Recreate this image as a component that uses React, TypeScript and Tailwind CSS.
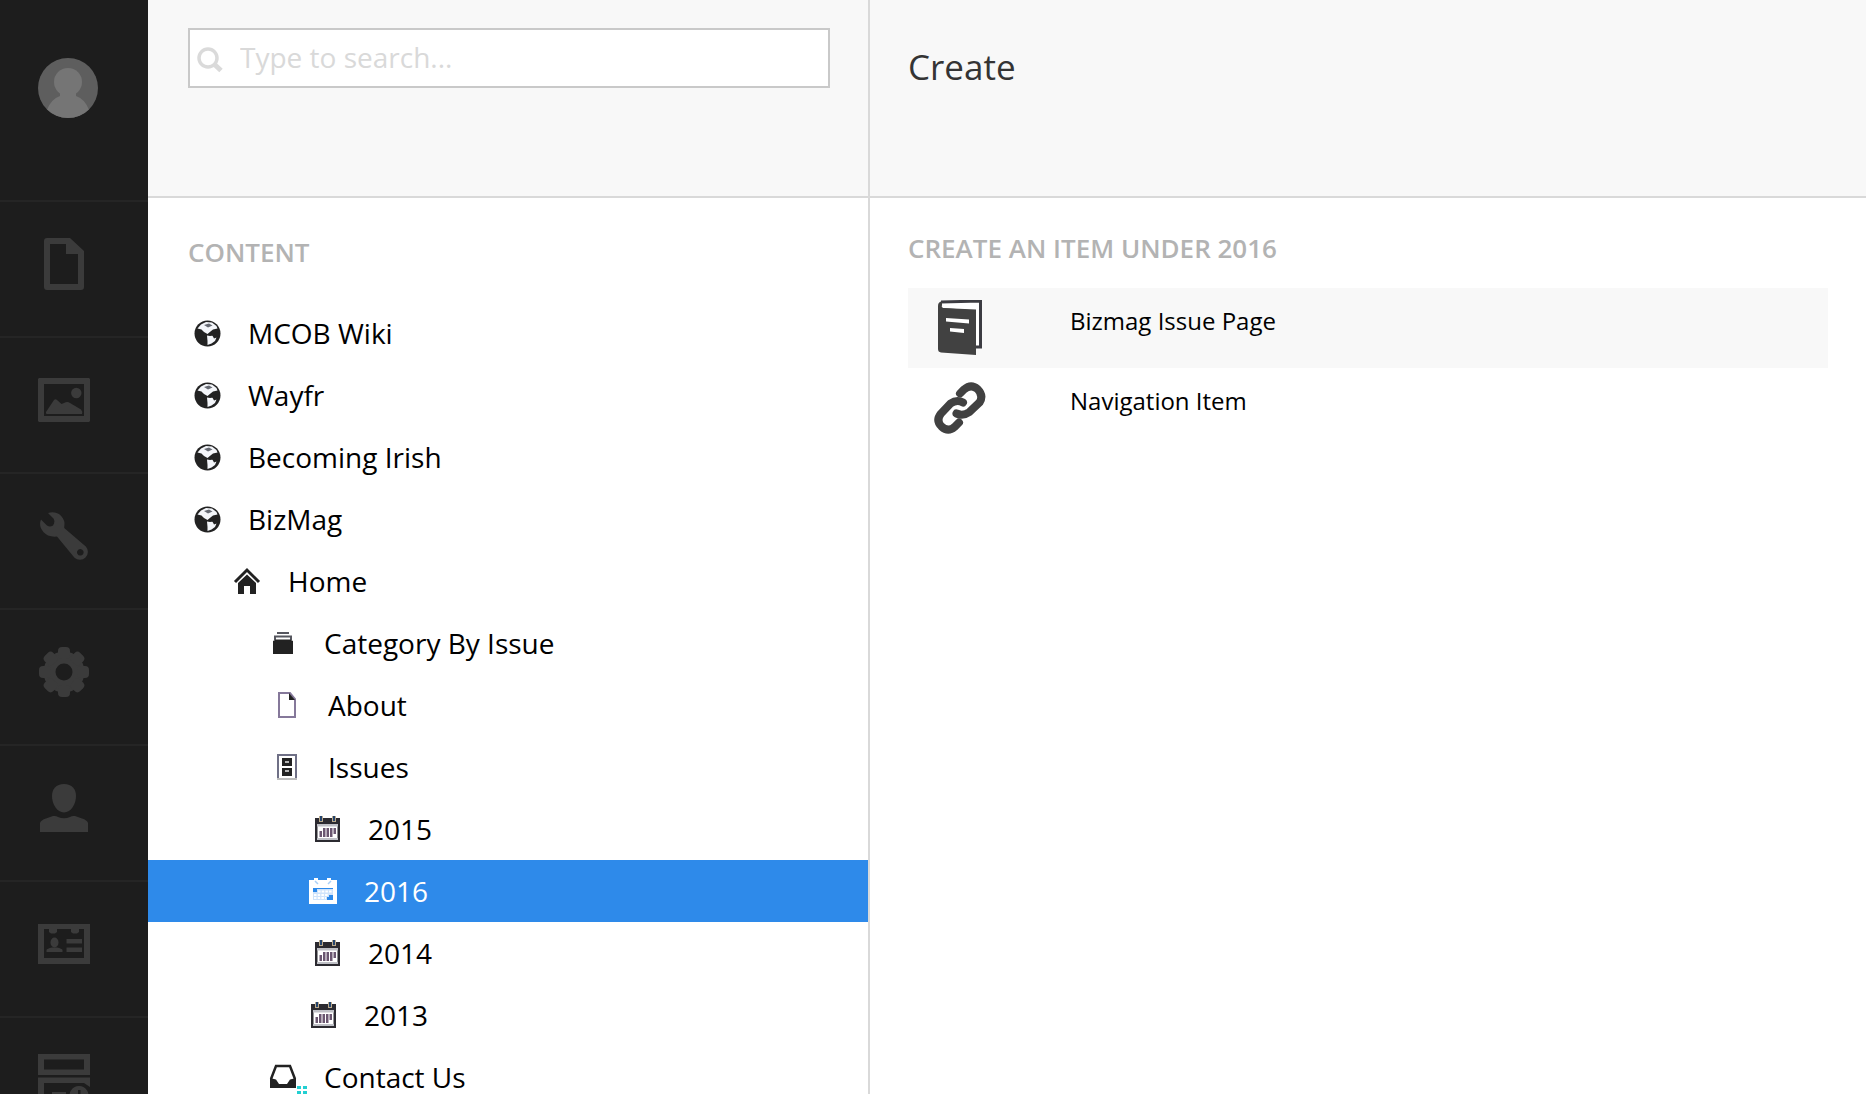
import React from 'react';

type IconProps = { className?: string };

function FileIcon() {
  return (
    <svg width="40" height="52" viewBox="0 0 40 52" fill="currentColor" fillRule="evenodd" aria-hidden="true">
      <path d="M3 0H26L40 13V49a3 3 0 0 1-3 3H3a3 3 0 0 1-3-3V3a3 3 0 0 1 3-3ZM6 6V46H34V16H22V6Z" />
    </svg>
  );
}

function MediaIcon() {
  return (
    <svg width="52" height="44" viewBox="0 0 52 44" fill="currentColor" fillRule="evenodd" aria-hidden="true">
      <path d="M1 0H51L52 1V43L51 44H1L0 43V1ZM6 6V38H46V6Z" />
      <circle cx="38.3" cy="15" r="5.2" />
      <path d="M8 34L16 22Q17.500 20.500 19 22L23.500 26L26 25Q29.500 23 32 25L43 31.500Q45 34 44 36H9Q7.500 36 8 34Z" />
    </svg>
  );
}

function WrenchIcon() {
  return (
    <svg width="48" height="48" viewBox="0 0 48 48" fill="currentColor" fillRule="evenodd" aria-hidden="true">
      <path d="M8 1Q14-1 19 2Q24 6 24.500 11L24.200 16L45.800 34.500A8 8 0 0 1 34.500 45.800L17 24.500Q12 25 8 23.500Q2 20 .5 15Q-.5 11 1 7.500L7 13.500Q10 15.500 13 13.500Q15.500 10 13.500 6.500ZM40.300 37a3.300 3.300 0 1 0 .01 0Z" />
    </svg>
  );
}

function GearIcon() {
  return (
    <svg width="52" height="52" viewBox="0 0 52 52" aria-hidden="true">
      <circle cx="26" cy="26" r="14.500" fill="none" stroke="currentColor" strokeWidth="12" />
      {[0, 45, 90, 135].map((angle) => (
        <g key={angle} transform={`rotate(${angle} 26 26)`} fill="currentColor">
          <rect x="20" y="1" width="12" height="12" rx="4" />
          <rect x="20" y="39" width="12" height="12" rx="4" />
        </g>
      ))}
    </svg>
  );
}

function UserIcon() {
  return (
    <svg width="48" height="48" viewBox="0 0 48 48" fill="currentColor" aria-hidden="true">
      <path d="M24 0C32 0 36 5 36 12C36 20 31 28.500 24 28.500S12 20 12 12C12 5 16 0 24 0Z" />
      <path d="M0 48V39Q1 36 6 34.500L13 32Q16 31.500 18 33Q24 35.500 30 33Q32 31.500 35 32L42 34.500Q47 36 48 39V48Z" />
    </svg>
  );
}

function CardIcon() {
  return (
    <svg width="52" height="40" viewBox="0 0 52 40" fill="currentColor" fillRule="evenodd" aria-hidden="true">
      <path d="M0 0H52V40H0ZM6 5V34H46V5H41V8L39 9.500H35L33 8V5H19V8L17 9.500H13L11 8V5Z" />
      <ellipse cx="16.500" cy="18.500" rx="4" ry="5" />
      <path d="M8.500 28V26Q9 24.500 14 23.500H19Q24 24.500 24.500 26V28ZM28.500 15H44V19.500H28.500ZM28.500 23.500H44V28H28.500Z" />
    </svg>
  );
}

function FormIcon() {
  return (
    <svg width="52" height="52" viewBox="0 0 52 52" fill="currentColor" fillRule="evenodd" aria-hidden="true">
      <path d="M0 0H52V21H0ZM6 5.500V15.500H46V5.500Z" />
      <path d="M0 23.500H52V33L46 29H6V46H30V52H0Z" />
      <path d="M14 38H28V41H14Z" />
      <path d="M41 32a9.500 9.500 0 1 0 .01 0ZM40 36H42.500V40H46V42.500H40Z" />
    </svg>
  );
}

function GlobeIcon() {
  return (
    <svg width="27" height="27" viewBox="0 0 27 27" aria-hidden="true">
      <circle cx="13.500" cy="13.500" r="13" fill="#222" />
      <path d="M3.500 8.500L7 4.500L12 2L18 2.500L22.500 6L23.500 8.500L19 9.500L16.500 11.500L13.500 14L10 12L7.500 9.500Z" fill="#f4f6fa" />
      <path d="M10 5L15 3.500L18.500 5.500L14 7.500Z" fill="#666a73" />
      <path d="M13 15.500L16 16L20 15.500L22.500 17.500L21 21L17.500 23.500L13.500 25V21Z" fill="#f4f6fa" />
      <path d="M17.500 14L20 18.500L24 17L25 12Z" fill="#222" />
    </svg>
  );
}

function HomeIcon() {
  return (
    <svg width="28" height="28" viewBox="0 0 28 28" aria-hidden="true">
      <path d="M2 15L14 3L26 15" fill="none" stroke="#222" strokeWidth="3" />
      <path d="M5 16L14 7.500L23 16V27H17V19H11V27H5Z" fill="#222" />
    </svg>
  );
}

function ArchiveIcon() {
  return (
    <svg width="22" height="23" viewBox="0 0 22 23" aria-hidden="true">
      <path d="M5 1H17M3 8V4.500H19V8" fill="none" stroke="#55565e" strokeWidth="2" />
      <path d="M1 9L4 7.500H18L21 9V22H1Z" fill="#222" />
    </svg>
  );
}

function PageIcon() {
  return (
    <svg width="18" height="26" viewBox="0 0 18 26" aria-hidden="true">
      <path d="M1 1H12L17 7V25H1Z" fill="none" stroke="#85789a" strokeWidth="2" />
      <path d="M11 1L17 8H11Z" fill="#222" />
    </svg>
  );
}

function ServerIcon() {
  return (
    <svg width="20" height="26" viewBox="0 0 20 26" aria-hidden="true">
      <path d="M1 24V1H19V24" fill="none" stroke="#6f7086" strokeWidth="2" />
      <path d="M0 24H20V26H0Z" fill="#bdbdbd" />
      <path d="M5 4H15V12H5ZM5 14H15V22H5Z" fill="#222" />
      <path d="M8 8H12M8 17H12" stroke="#e8e8e8" strokeWidth="1.500" />
    </svg>
  );
}

function CalendarIcon() {
  return (
    <svg width="27" height="27" viewBox="0 0 27 27" aria-hidden="true">
      <path d="M1 2H26V26H1ZM3.500 10V23.500H23.500V10Z" fill="#2b2a30" fillRule="evenodd" />
      <path d="M3 8H24V10.500H3ZM3 22H24V24H3Z" fill="#bfc0c6" />
      <path d="M7 0V6M20 0V6" stroke="#b9a98c" strokeWidth="4" />
      <path d="M7 0V5M20 0V5" stroke="#24446e" strokeWidth="2" />
      <path d="M9 13.500H22.500M5.500 16.500H22.500M5.500 19.500H19" stroke="#6a5670" strokeWidth="3" strokeDasharray="2.500 1" />
    </svg>
  );
}

function SelectedCalendarIcon() {
  return (
    <svg width="28" height="27" viewBox="0 0 28 27" aria-hidden="true">
      <path d="M0 2H5V0H9V2H18V0H22V2H28V26H0Z" fill="#fff" />
      <path d="M4 10H24V22H4Z" fill="#cfe3fb" />
      <path d="M4 10H24V11H8V14H4ZM18 22V19H20V17H24V22Z" fill="#2e8aea" />
      <path d="M9 13.500H23M5 17H19M5 20H17" stroke="#fff" strokeWidth="2" strokeDasharray="2.500 1.200" />
      <path d="M6 3L9 6M19 6L22 3" stroke="#a9cff7" strokeWidth="1.500" />
    </svg>
  );
}

function InboxIcon() {
  return (
    <span className="relative flex">
      <svg width="28" height="26" viewBox="0 0 28 26" aria-hidden="true">
        <path d="M2 15L7 2H21L26 15" fill="none" stroke="#222" strokeWidth="2.500" />
        <path d="M1 14L7 15.500L10 20H18L21 15.500L27 14V24H1Z" fill="#222" />
      </svg>
      <svg className="absolute top-[22px] left-[27px]" width="12" height="12" viewBox="0 0 12 12" fill="#22cfd2" aria-hidden="true">
        <path d="M1 0H5V3H1ZM7 0H11V3H7ZM1 5H5V8H1ZM7 5H11V8H7Z" />
      </svg>
    </span>
  );
}

function SearchIcon({ className }: IconProps) {
  return (
    <svg className={className} width="26" height="26" viewBox="0 0 26 26" fill="none" stroke="#dadada" aria-hidden="true">
      <circle cx="11" cy="11" r="9" strokeWidth="3.500" />
      <path d="M17 17L24 23.500" strokeWidth="5" />
    </svg>
  );
}

function BookIcon() {
  return (
    <svg width="46" height="56" viewBox="0 0 46 56" aria-hidden="true">
      <path d="M4 2L43.500 1V47H38" fill="#fff" stroke="#3c3c42" strokeWidth="3" />
      <path d="M1 6Q1 1.500 5 1.500V5Q4 7 6 8L39 10.500V55L4 52.500Q1 52 1 49Z" fill="#414141" />
      <path d="M5 5.500L38 3.500V8L7 8Z" fill="#fff" />
      <path d="M5 8L39 9.500V12H5Z" fill="#414141" />
      <path d="M9 18L32 19.500V23.500L9 21.500ZM13 28L27 29V33L13 31.500Z" fill="#fff" />
    </svg>
  );
}

function LinkIcon() {
  return (
    <svg width="52" height="52" viewBox="0 0 52 52" fill="none" stroke="#414141" strokeWidth="8" strokeLinecap="round" aria-hidden="true">
      <path d="M26 11.500L30 7.500Q37 1.500 43.500 7Q50 13.500 45.500 20.500L35.500 30Q29 34.500 22.500 31.500" />
      <path d="M29 20.500Q23 17 16.500 21.500L7 31.500Q1.500 38.500 7.500 44.500Q14 50.500 20.500 45L25 40.500" />
    </svg>
  );
}

const sections = [
  { name: 'Content', icon: <FileIcon /> },
  { name: 'Media', icon: <MediaIcon /> },
  { name: 'Settings', icon: <WrenchIcon /> },
  { name: 'Developer', icon: <GearIcon /> },
  { name: 'Users', icon: <UserIcon /> },
  { name: 'Members', icon: <CardIcon /> },
  { name: 'Forms', icon: <FormIcon /> },
];

type Node = { label: string; icon: React.ReactNode; indent: string; selected?: boolean };

const nodes: Node[] = [
  { label: 'MCOB Wiki', icon: <GlobeIcon />, indent: 'pl-10' },
  { label: 'Wayfr', icon: <GlobeIcon />, indent: 'pl-10' },
  { label: 'Becoming Irish', icon: <GlobeIcon />, indent: 'pl-10' },
  { label: 'BizMag', icon: <GlobeIcon />, indent: 'pl-10' },
  { label: 'Home', icon: <HomeIcon />, indent: 'pl-20' },
  { label: 'Category By Issue', icon: <ArchiveIcon />, indent: 'pl-29' },
  { label: 'About', icon: <PageIcon />, indent: 'pl-30' },
  { label: 'Issues', icon: <ServerIcon />, indent: 'pl-30' },
  { label: '2015', icon: <CalendarIcon />, indent: 'pl-40' },
  { label: '2016', icon: <SelectedCalendarIcon />, indent: 'pl-39', selected: true },
  { label: '2014', icon: <CalendarIcon />, indent: 'pl-40' },
  { label: '2013', icon: <CalendarIcon />, indent: 'pl-39' },
  { label: 'Contact Us', icon: <InboxIcon />, indent: 'pl-29' },
];

function Sidebar() {
  return (
    <nav aria-label="Sections" className="flex w-[148px] shrink-0 flex-col overflow-hidden bg-[#1d1d1d] text-[#3b3b3b]">
      <div className="h-[200px] shrink-0 pt-[58px] pl-[38px]">
        <button aria-label="Your profile" className="block size-[60px] overflow-hidden rounded-full">
          <svg viewBox="0 0 60 60" aria-hidden="true">
            <rect width="60" height="60" fill="#5e5e5e" />
            <circle cx="30" cy="24" r="14" fill="#757575" />
            <path d="M22 34H38V38Q47 41 51 52V60H9V52Q13 41 22 38Z" fill="#757575" />
          </svg>
        </button>
      </div>
      {sections.map((section) => (
        <a key={section.name} href="#" aria-label={section.name} className="flex h-[136px] shrink-0 items-center justify-center border-t-2 border-[#252525] pr-5 pb-2.5">
          {section.icon}
        </a>
      ))}
    </nav>
  );
}

function TreePanel() {
  return (
    <section className="flex w-[722px] shrink-0 flex-col overflow-hidden border-r-2 border-[#d9d9d9] bg-white">
      <header className="h-[198px] shrink-0 border-b-2 border-[#d9d9d9] bg-[#f8f8f8] pt-7 pr-[38px] pl-10">
        <label className="flex h-[60px] items-center border-2 border-[#c9c9c9] bg-white pl-[7px]">
          <SearchIcon className="mt-1" />
          <input type="text" aria-label="Search" placeholder="Type to search..." className="h-full min-w-0 flex-1 pb-0.5 pl-[17px] text-[28px] text-[#222] outline-none placeholder:text-[#d9d9d9]" />
        </label>
      </header>
      <h2 className="mt-9 mb-8 pl-10 text-[26px] leading-9 font-semibold text-[#b3b3b3]">CONTENT</h2>
      <ul>
        {nodes.map((node) => (
          <li key={node.label} className={node.selected ? 'bg-[#2e8aea] text-white' : 'text-black'}>
            <a href="#" className={`flex h-[62px] items-center gap-[22px] text-[28px] ${node.indent}`}>
              <span className="flex w-[38px] shrink-0 justify-center">{node.icon}</span>
              {node.label}
            </a>
          </li>
        ))}
      </ul>
    </section>
  );
}

function CreatePanel() {
  return (
    <main className="min-w-0 flex-1 bg-white">
      <header className="h-[198px] border-b-2 border-[#d9d9d9] bg-[#f8f8f8] pt-[43px] pl-[38px]">
        <h1 className="text-[35px] leading-12 text-[#343434]">Create</h1>
      </header>
      <div className="px-[38px] pt-8">
        <h2 className="mb-[22px] text-[26px] leading-9 font-semibold text-[#b3b3b3]">CREATE AN ITEM UNDER 2016</h2>
        <ul>
          <li>
            <a href="#" className="flex h-20 items-center bg-[#f8f8f8] text-[24px] text-black">
              <span className="flex w-[104px] shrink-0 justify-center">
                <BookIcon />
              </span>
              <span className="pb-3.5 pl-[58px]">Bizmag Issue Page</span>
            </a>
          </li>
          <li>
            <a href="#" className="flex h-20 items-center text-[24px] text-black">
              <span className="flex w-[104px] shrink-0 justify-center">
                <LinkIcon />
              </span>
              <span className="pb-3.5 pl-[58px]">Navigation Item</span>
            </a>
          </li>
        </ul>
      </div>
    </main>
  );
}

export default function App() {
  return (
    <div className="flex h-screen overflow-hidden font-['Open_Sans',sans-serif]">
      <Sidebar />
      <TreePanel />
      <CreatePanel />
    </div>
  );
}
